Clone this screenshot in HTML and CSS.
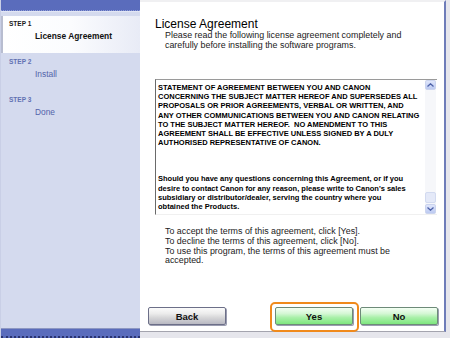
FILE: index.html
```html
<!DOCTYPE html>
<html lang="en">
<head>
  <meta charset="UTF-8">
  <title>License Agreement</title>
  <link rel="stylesheet" href="styles.css">
</head>

<body>
  <div class="side">
    <div class="side-top"></div>
    <ul class="steps">
      <li class="step active">
        <span class="step-no">STEP 1</span>
        <span class="step-name">License Agreement</span>
      </li>
      <li class="step">
        <span class="step-no">STEP 2</span>
        <span class="step-name">Install</span>
      </li>
      <li class="step">
        <span class="step-no">STEP 3</span>
        <span class="step-name">Done</span>
      </li>
    </ul>
    <div class="side-bottom"></div>
  </div>

  <div class="main">
    <h1>License Agreement</h1>
    <p class="intro">Please read the following license agreement completely and<br>carefully before installing the software programs.</p>

    <div class="license">
      <div class="license-text">
        <p>STATEMENT OF AGREEMENT BETWEEN YOU AND CANON<br>CONCERNING THE SUBJECT MATTER HEREOF AND SUPERSEDES ALL<br>PROPOSALS OR PRIOR AGREEMENTS, VERBAL OR WRITTEN, AND<br>ANY OTHER COMMUNICATIONS BETWEEN YOU AND CANON RELATING<br>TO THE SUBJECT MATTER HEREOF.&nbsp; NO AMENDMENT TO THIS<br>AGREEMENT SHALL BE EFFECTIVE UNLESS SIGNED BY A DULY<br>AUTHORISED REPRESENTATIVE OF CANON.</p>
        <p class="gap">Should you have any questions concerning this Agreement, or if you<br>desire to contact Canon for any reason, please write to Canon's sales<br>subsidiary or distributor/dealer, serving the country where you<br>obtained the Products.</p>
      </div>
      <div class="scrollbar">
        <span class="arrow up">
          <svg width="7" height="4" viewBox="0 0 7 4"><path d="M0.5 3.5 L3.5 0.8 L6.5 3.5" fill="none" stroke="#4d61a8" stroke-width="1.3"/></svg>
        </span>
        <span class="track"><span class="thumb"></span></span>
        <span class="arrow down">
          <svg width="7" height="4" viewBox="0 0 7 4"><path d="M0.5 0.5 L3.5 3.2 L6.5 0.5" fill="none" stroke="#4d61a8" stroke-width="1.3"/></svg>
        </span>
      </div>
    </div>

    <p class="note">To accept the terms of this agreement, click [Yes].<br>To decline the terms of this agreement, click [No].<br>To use this program, the terms of this agreement must be<br>accepted.</p>

    <div class="buttons">
      <button class="btn back">Back</button>
      <button class="btn green focus">Yes</button>
      <button class="btn green">No</button>
    </div>
  </div>
</body>

</html>
```

FILE: styles.css
```css
* {
  margin: 0;
  padding: 0;
}

body {
  width: 450px;
  height: 338px;
  overflow: hidden;
  display: flex;
  background: #e6e6ec;
  font-family: "Liberation Sans", Arial, sans-serif;
}

/* left step list */
.side {
  width: 140px;
  height: 338px;
  display: flex;
  flex-direction: column;
  background: #d4daee;
  border-left: 1px solid #c9cfe6;
  box-sizing: border-box;
}

.side-top {
  height: 10px;
  background: #5a6cbc;
  border-bottom: 1px dotted #8f9cd6;
}

.steps {
  list-style: none;
  flex: 1;
  padding-top: 4px;
  border-top: 1px solid #e2e6f4;
}

.step {
  height: 38px;
  box-sizing: border-box;
  padding: 3px 0 0 8px;
  display: flex;
  flex-direction: column;
}

.step.active {
  height: 37px;
  margin-bottom: 1px;
  background: linear-gradient(to right, #ffffff 0%, #fbfcfe 50%, #e8ebf6 100%);
  border-left: 2px solid #b8bdd0;
  padding-left: 6px;
}

.step-no {
  font-size: 6.5px;
  line-height: 10px;
  font-weight: bold;
  color: #6171b2;
}

.step-name {
  margin: 2px 0 0 26px;
  font-size: 8.4px;
  line-height: 10px;
  color: #5363aa;
}

.step.active .step-no {
  color: #1a1a1a;
}

.step.active .step-name {
  font-weight: bold;
  color: #111;
}

.side-bottom {
  height: 10px;
  background: #5a6cbc;
  border-top: 1px solid #8d97c2;
  border-bottom: 2px dotted #2a3470;
  box-sizing: border-box;
}

/* right panel */
.main {
  width: 306px;
  height: 332px;
  box-sizing: border-box;
  background: #fff;
  border-top: 2px solid #f0f0f2;
  border-right: 2px solid #6f7db9;
  border-bottom: 1px solid #a4a4ae;
  padding: 16px 6px 6px 15px;
  display: flex;
  flex-direction: column;
  color: #1a1a1a;
}

.main h1 {
  font-size: 12px;
  line-height: 13px;
  font-weight: normal;
  color: #000;
}

.intro {
  margin: -1px 0 0 10px;
  font-size: 8.9px;
  line-height: 10px;
  color: #222;
}

.license {
  margin-top: 29px;
  height: 136px;
  width: 282px;
  box-sizing: border-box;
  display: flex;
  border-top: 1px solid #9a9a9a;
  border-left: 1px solid #6a6a6a;
  border-bottom: 1px solid #f0f0f0;
}

.license-text {
  flex: 1;
  overflow: hidden;
  white-space: nowrap;
  padding: 3px 0 0 2px;
  font-size: 7.5px;
  line-height: 9.2px;
  font-weight: bold;
  color: #000;
}

.license-text .gap {
  margin-top: 27px;
}

.scrollbar {
  width: 11px;
  display: flex;
  flex-direction: column;
  background: #f6f7fa;
  margin-right: 1px;
}

.arrow {
  height: 10px;
  display: flex;
  align-items: center;
  justify-content: center;
  background: linear-gradient(#dfe6fb, #bccaf1);
  border: 1px solid #cbd4ee;
  border-radius: 2px;
  box-sizing: border-box;
}

.track {
  flex: 1;
  display: flex;
  flex-direction: column;
  justify-content: flex-end;
  padding-bottom: 1px;
}

.thumb {
  height: 9px;
  background: #e4e9f8;
  border: 1px solid #d2daf0;
  border-radius: 2px;
}

.note {
  margin: 12px 0 0 10px;
  font-size: 8.9px;
  line-height: 9.8px;
  color: #222;
}

.buttons {
  margin-top: auto;
  display: flex;
  align-items: center;
  margin-left: -7px;
}

.btn {
  position: relative;
  width: 78px;
  height: 18px;
  border: 1px solid #6c6f88;
  border-radius: 2px;
  font-family: "Liberation Sans", Arial, sans-serif;
  font-size: 9.5px;
  font-weight: bold;
  color: #111;
  box-shadow: 1px 1px 0 #9a9cb0;
}

.btn.back {
  background: linear-gradient(#fbfbfb 0%, #ececec 35%, #d6d6d8 60%, #b9b9c2 100%);
}

.btn.green {
  background: linear-gradient(#f4fff4 0%, #d4f7d4 35%, #a8f0a8 60%, #7ee67e 100%);
  border-color: #6d8a78;
}

.btn.focus {
  margin-left: auto;
  margin-right: 7px;
}

.btn.focus::after {
  content: "";
  position: absolute;
  left: -6px;
  top: -6px;
  right: -7px;
  bottom: -8px;
  border: 2px solid #f08a1c;
  border-radius: 5px;
}
```
